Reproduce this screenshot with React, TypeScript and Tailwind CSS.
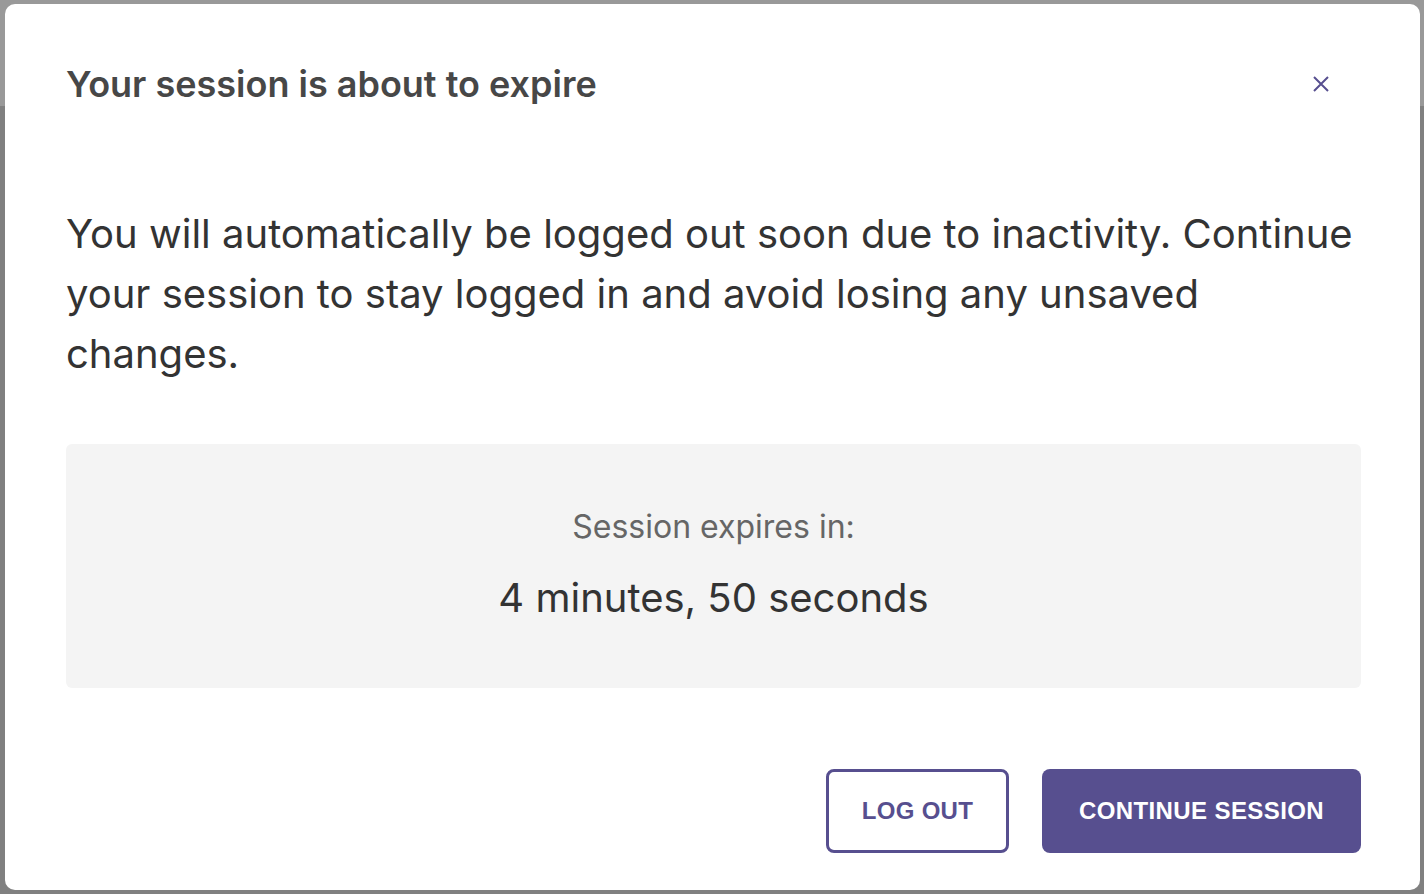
import React from 'react';

const SessionModal: React.FC = () => {
  return (
    <div className="flex-1 bg-white rounded-[10px] pl-[61px] pr-[59px] pt-[56px] font-['Inter',sans-serif]">
      <div className="flex items-center justify-between">
        <h2 className="text-[36px] leading-[40px] font-semibold text-[#474747]">
          Your session is about to expire
        </h2>
        <button className="w-[48px] h-[48px] mr-[16px] flex items-center justify-center text-[#574f8f]">
          <svg width="16" height="16" viewBox="0 0 16 16" fill="none" stroke="currentColor" strokeWidth="2">
            <path d="M1 1L15 15M15 1L1 15" />
          </svg>
        </button>
      </div>

      <p className="mt-[96px] text-[40px] leading-[60px] text-[#333333]">
        You will automatically be logged out soon due to inactivity. Continue your session to stay logged in and avoid
        losing any unsaved changes.
      </p>

      <div className="mt-[60px] bg-[#f4f4f4] rounded-[6px] pt-[63px] pb-[66px] text-center">
        <p className="text-[32px] leading-[40px] text-[#666666]">Session expires in:</p>
        <p className="mt-[27px] text-[40px] leading-[48px] text-[#333333]">4 minutes, 50 seconds</p>
      </div>

      <div className="mt-[81px] flex justify-end gap-[33px]">
        <button className="w-[183px] h-[84px] rounded-[8px] border-[3px] border-[#574f8f] bg-white text-[#574f8f] font-['Liberation_Sans',Arial,sans-serif] font-bold text-[24px] tracking-[0.3px]">
          LOG OUT
        </button>
        <button className="w-[319px] h-[84px] rounded-[8px] bg-[#574f8f] text-white font-['Liberation_Sans',Arial,sans-serif] font-bold text-[24px] tracking-[0.4px]">
          CONTINUE SESSION
        </button>
      </div>
    </div>
  );
};

export default function App() {
  return (
    <div className="w-[1424px] h-[894px] overflow-hidden flex pt-[4px] pb-[4px] pl-[5px] pr-[4px] bg-[linear-gradient(to_bottom,#999999_0px,#999999_106px,#808080_106px)]">
      <SessionModal />
    </div>
  );
}
